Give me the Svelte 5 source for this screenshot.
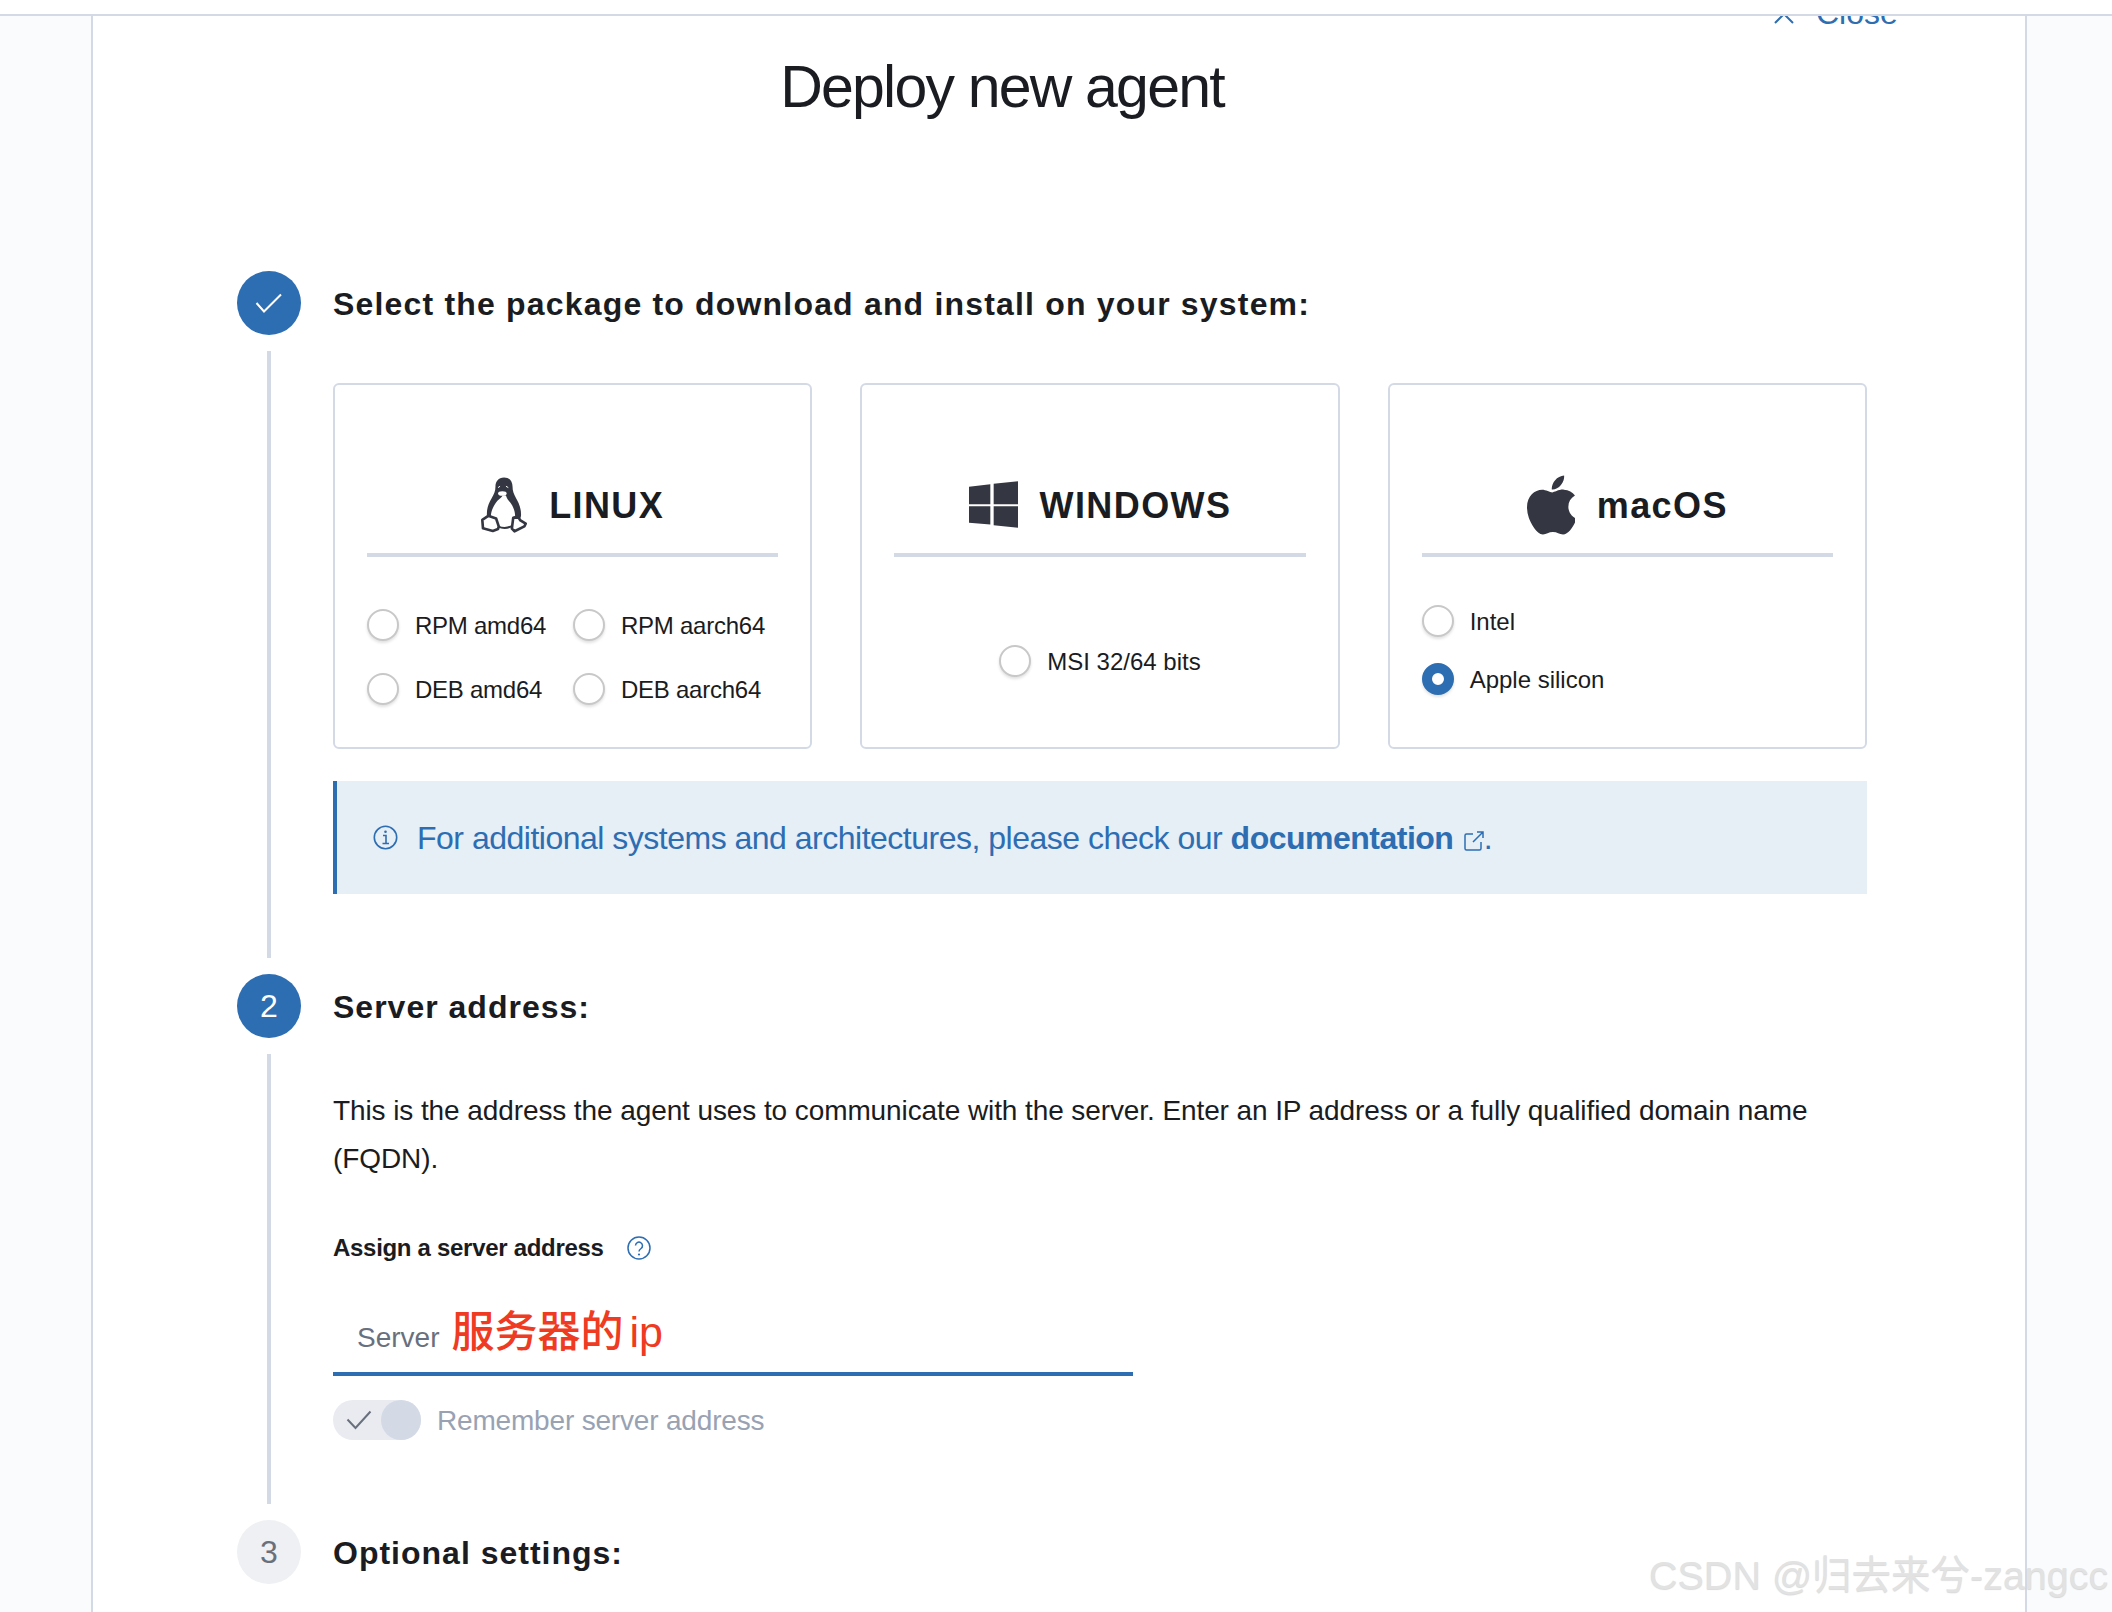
<script lang="ts">
  const linux = ["RPM amd64", "RPM aarch64", "DEB amd64", "DEB aarch64"];
</script>

<div class="page">
  <div class="topbar"></div>
  <div class="flyout">
    <button class="close">
      <svg width="20" height="20" viewBox="0 0 20 20"><path d="M1 1l18 18M19 1L1 19" stroke="currentColor" stroke-width="2" fill="none" /></svg>
      Close
    </button>
    <h1>Deploy new agent</h1>

    <section class="step-head first">
      <div class="circle done">
        <svg width="28" height="20" viewBox="0 0 28 20"><path d="M1.5 10l7.5 8.500L26 1.500" stroke="#fff" stroke-width="2" fill="none" /></svg>
      </div>
      <h2>Select the package to download and install on your system:</h2>
    </section>
    <div class="step-body one">
      <div class="cards">
        <div class="card">
          <div class="card-head">
            <svg class="penguin" viewBox="0 0 140 170">
              <path fill="#343741" d="M70 1c-17 0-26 12-26 28 0 14-4 22-12 36-9 15-15 30-14 52 0 6 2 11 6 14h90c6-4 8-10 8-16 0-22-8-38-16-52-6-11-10-20-10-34 0-16-9-28-26-28z" />
              <path fill="#fff" d="M66 56c-4 6-10 10-16 16-10 12-20 30-20 48 0 10 6 18 16 22h44c8-3 14-10 14-22 0-18-8-34-16-44-6-7-10-12-12-20z" />
              <ellipse cx="65" cy="50" rx="13" ry="7" fill="#fff" />
              <path d="M52 32l6-4M76 28l7 4" stroke="#fff" stroke-width="3" fill="none" />
              <path fill="#fff" stroke="#343741" stroke-width="8" stroke-linejoin="round" d="M22 118l24 8 8 24-2 8-16 6-30-8-2-26z" />
              <path fill="#fff" stroke="#343741" stroke-width="8" stroke-linejoin="round" d="M98 124l14-4 8 12 16 10-4 8-30 15-8-8z" />
              <path d="M52 150c12 6 28 6 40 0" stroke="#343741" stroke-width="6" fill="none" />
            </svg>
            <span>LINUX</span>
          </div>
          <div class="options linux">
            {#each linux as name}
              <label class="opt"><span class="radio"></span><span class="txt">{name}</span></label>
            {/each}
          </div>
        </div>
        <div class="card">
          <div class="card-head">
            <svg class="win" viewBox="0 0 147 140">
              <path fill="#343741" d="M0 17l64-8v60H0zM74 8l73-8v69H74zM0 75h64v55l-64-5zM74 75h73v65l-73-8z" />
            </svg>
            <span>WINDOWS</span>
          </div>
          <div class="options windows">
            <label class="opt"><span class="radio"></span><span class="txt">MSI 32/64 bits</span></label>
          </div>
        </div>
        <div class="card">
          <div class="card-head">
            <svg class="apple" viewBox="4 32 365 448">
              <path fill="#343741" d="M318.700 268.700c-.2-36.700 16.400-64.400 50-84.800-18.800-26.900-47.200-41.700-84.700-44.600-35.500-2.800-74.300 20.700-88.500 20.700-15 0-49.400-19.700-76.400-19.700C63.300 141.200 4 184.800 4 273.500q0 39.300 14.400 81.200c12.800 36.700 59 126.700 107.200 125.200 25.200-.6 43-17.900 75.800-17.900 31.800 0 48.300 17.900 76.400 17.900 48.600-.7 90.400-82.500 102.600-119.300-65.200-30.700-61.700-90-61.700-91.900zm-56.600-164.200c27.300-32.400 24.800-61.900 24-72.500-24.100 1.400-52 16.400-67.900 34.900-17.500 19.800-27.800 44.300-25.600 71.900 26.100 2 49.900-11.400 69.500-34.300z" />
            </svg>
            <span>macOS</span>
          </div>
          <div class="options mac">
            <label class="opt"><span class="radio"></span><span class="txt">Intel</span></label>
            <label class="opt"><span class="radio on"></span><span class="txt">Apple silicon</span></label>
          </div>
        </div>
      </div>

      <div class="callout">
        <svg width="25" height="25" viewBox="0 0 25 25">
          <circle cx="12.500" cy="12.500" r="11.200" stroke="#2d6db2" stroke-width="1.600" fill="none" />
          <path d="M10 10.500h3v8M9.500 18.500h6.500" stroke="#2d6db2" stroke-width="1.600" fill="none" />
          <circle cx="12.500" cy="6.800" r="1.300" fill="#2d6db2" />
        </svg>
        <p>For additional systems and architectures, please check our <b>documentation</b>
          <svg class="ext" width="20" height="20" viewBox="0 0 20 20">
            <path d="M9 3H2.500a1.500 1.500 0 0 0-1.500 1.500v13A1.500 1.500 0 0 0 2.500 19h13a1.500 1.500 0 0 0 1.500-1.500V11M9 11l10-10M13 1h6v6" stroke="#2d6db2" stroke-width="1.500" fill="none" />
          </svg>.</p>
      </div>
    </div>

    <section class="step-head">
      <div class="circle current">2</div>
      <h2>Server address:</h2>
    </section>
    <div class="step-body two">
      <p class="desc">This is the address the agent uses to communicate with the server. Enter an IP address or a fully qualified domain name (FQDN).</p>
      <div class="field-label">
        <span>Assign a server address</span>
        <svg width="24" height="24" viewBox="0 0 24 24">
          <circle cx="12" cy="12" r="11" stroke="#2d6db2" stroke-width="1.500" fill="none" />
          <path d="M8.500 9.500a3.500 3.500 0 1 1 5.500 3c-1.400 1-2 1.600-2 3" stroke="#2d6db2" stroke-width="1.500" fill="none" />
          <circle cx="12" cy="18.500" r="1.100" fill="#2d6db2" />
        </svg>
      </div>
      <div class="input">
        <span class="ph">Server</span>
        <span class="note">服务器的 ip</span>
      </div>
      <div class="switch-row">
        <div class="switch">
          <svg width="26" height="20" viewBox="0 0 26 20"><path d="M1.500 9.500l8 8.500L24.500 1.500" stroke="#69707d" stroke-width="2" fill="none" /></svg>
          <span class="thumb"></span>
        </div>
        <span class="switch-label">Remember server address</span>
      </div>
    </div>

    <section class="step-head">
      <div class="circle todo">3</div>
      <h2>Optional settings:</h2>
    </section>
    <div class="step-body"></div>
  </div>
  <div class="watermark">CSDN @归去来兮-zangcc</div>
</div>

<style>
  :global(body) {
    margin: 0;
    font-family: "Liberation Sans", "Noto Sans CJK SC", sans-serif;
    color: #1a1c21;
  }
  .page {
    position: relative;
    height: 1612px;
    overflow: hidden;
    display: flex;
    flex-direction: column;
    background: #fafbfd;
  }
  .topbar {
    height: 14px;
    flex: none;
    background: #fff;
    border-bottom: 2px solid #d3dae6;
  }
  .flyout {
    position: relative;
    flex: 1;
    margin-left: 91px;
    padding: 0 158px 0 144px;
    box-sizing: border-box;
    width: 1936px;
    background: #fff;
    border-left: 2px solid #d3dae6;
    border-right: 2px solid #d3dae6;
    overflow: hidden;
  }
  .close {
    position: absolute;
    top: -21px;
    left: 1681px;
    display: flex;
    align-items: center;
    gap: 22px;
    padding: 0;
    border: none;
    background: none;
    font: 400 32px "Liberation Sans", sans-serif;
    color: #2d6db2;
  }
  h1 {
    margin: 0 -158px 0 -144px;
    padding: 36px 114px 0 0;
    height: 215px;
    box-sizing: border-box;
    text-align: center;
    font-size: 59px;
    line-height: 70px;
    font-weight: 400;
    letter-spacing: -1.800px;
    color: #1a1c21;
  }
  .step-head {
    display: flex;
    align-items: center;
    gap: 32px;
    height: 64px;
  }
  .step-head.first {
    margin-top: 40px;
  }
  .step-head.first h2 {
    letter-spacing: 1.180px;
  }
  h2 {
    margin: 0;
    padding-top: 2px;
    font-size: 32px;
    font-weight: 700;
    letter-spacing: 1px;
  }
  .circle {
    width: 64px;
    height: 64px;
    flex: none;
    border-radius: 50%;
    display: flex;
    align-items: center;
    justify-content: center;
    font-size: 32px;
  }
  .done,
  .current {
    background: #2d6db2;
    color: #fff;
  }
  .todo {
    background: #eff0f3;
    color: #69707d;
  }
  .step-body {
    margin: 16px 0 16px 30px;
    padding-left: 62px;
    border-left: 4px solid #d3dae6;
    box-sizing: border-box;
  }
  .step-body.one {
    height: 607px;
    padding-top: 32px;
  }
  .step-body.two {
    height: 450px;
    padding-top: 33px;
  }
  .cards {
    display: flex;
    gap: 48px;
  }
  .card {
    flex: 1;
    height: 366px;
    box-sizing: border-box;
    padding: 0 32px;
    border: 2px solid #d3dae6;
    border-radius: 6px;
    background: #fff;
  }
  .card-head {
    height: 172px;
    box-sizing: border-box;
    padding-top: 98px;
    display: flex;
    align-items: flex-start;
    justify-content: center;
    gap: 22px;
    border-bottom: 4px solid #d3dae6;
    font-size: 36px;
    line-height: 46px;
    font-weight: 700;
    letter-spacing: 1.400px;
  }
  .penguin {
    width: 46px;
    height: 56px;
    margin-top: -6px;
  }
  .win {
    width: 49px;
    height: 47px;
    margin-top: -2px;
  }
  .apple {
    width: 48px;
    height: 60px;
    margin-top: -8px;
  }
  .options {
    font-size: 24px;
    color: #1a1c21;
  }
  .options.linux {
    display: grid;
    grid-template-columns: 206px 1fr;
    row-gap: 32px;
    padding-top: 52px;
    letter-spacing: -0.250px;
  }
  .options.windows {
    display: flex;
    justify-content: center;
    padding-top: 88px;
  }
  .options.mac {
    display: flex;
    flex-direction: column;
    gap: 26px;
    padding-top: 48px;
  }
  .opt {
    display: flex;
    align-items: center;
    gap: 16px;
    height: 32px;
  }
  .txt {
    padding-top: 2px;
  }
  .radio {
    width: 32px;
    height: 32px;
    box-sizing: border-box;
    flex: none;
    border-radius: 50%;
    background: #fff;
    border: 2px solid #c8c8c8;
    box-shadow: 0 2px 3px rgba(0, 0, 0, 0.12);
  }
  .radio.on {
    border: 10px solid #2d6db2;
  }
  .callout {
    margin-top: 32px;
    height: 113px;
    box-sizing: border-box;
    display: flex;
    align-items: center;
    gap: 19px;
    padding-left: 36px;
    background: #e6eef6;
    border-left: 4px solid #2d6db2;
    color: #2d6db2;
    font-size: 32px;
    letter-spacing: -0.500px;
  }
  .callout p {
    margin: 0;
    padding-top: 2px;
  }
  .ext {
    vertical-align: -2px;
    margin-left: 2px;
  }
  .desc {
    margin: 0;
    font-size: 28px;
    line-height: 48px;
    letter-spacing: -0.095px;
  }
  .field-label {
    display: flex;
    align-items: center;
    gap: 23px;
    margin-top: 49px;
    font-size: 24px;
    font-weight: 700;
    height: 32px;
    letter-spacing: -0.300px;
  }
  .input {
    width: 800px;
    height: 87px;
    margin-top: 25px;
    box-sizing: border-box;
    padding: 8px 0 0 24px;
    display: flex;
    align-items: baseline;
    gap: 12px;
    border-bottom: 4px solid #2d6db2;
  }
  .ph {
    font-size: 28px;
    color: #69707d;
  }
  .note {
    font-size: 43px;
    font-weight: 500;
    word-spacing: -6px;
    color: #ee3b22;
  }
  .switch-row {
    display: flex;
    align-items: center;
    gap: 16px;
    margin-top: 24px;
  }
  .switch {
    width: 88px;
    height: 40px;
    box-sizing: border-box;
    padding-left: 13px;
    border-radius: 20px;
    background: #e9ebf1;
    display: flex;
    align-items: center;
    justify-content: space-between;
  }
  .thumb {
    width: 40px;
    height: 40px;
    border-radius: 50%;
    background: #d3dae6;
  }
  .switch-label {
    padding-top: 2px;
    font-size: 28px;
    color: #98a2b3;
    letter-spacing: -0.180px;
  }
  .watermark {
    position: absolute;
    left: 1649px;
    top: 1551px;
    white-space: nowrap;
    font-size: 39.500px;
    line-height: 48px;
    color: #e2e2e2;
    text-shadow: 0 1px 1px rgba(0, 0, 0, 0.15);
  }
</style>
